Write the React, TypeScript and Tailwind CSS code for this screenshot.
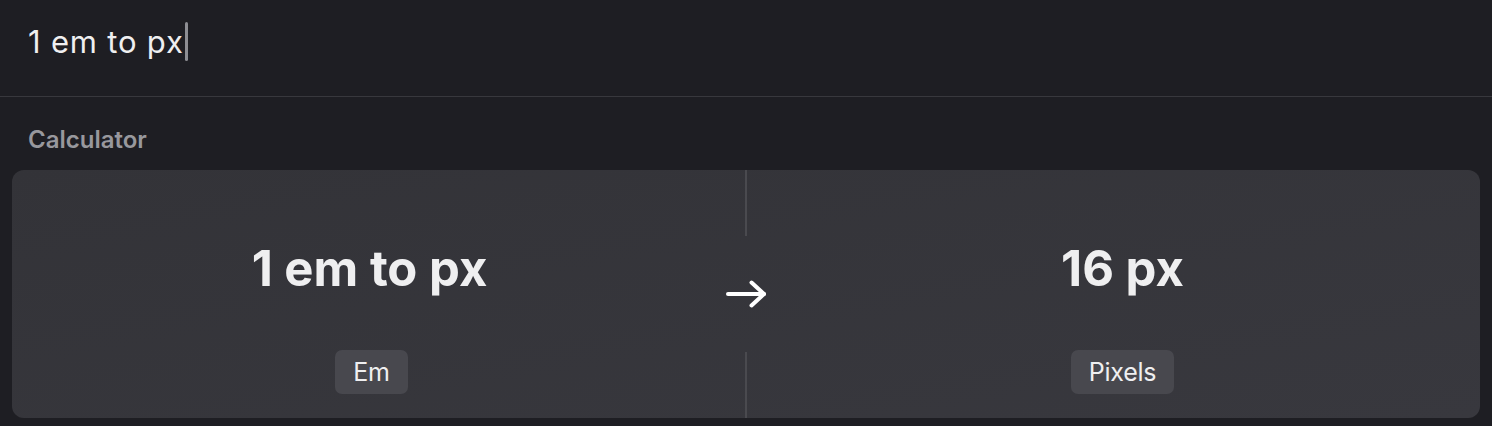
export default function App() {
  return (
    <div className="flex h-[426px] w-[1492px] flex-col overflow-hidden bg-[#1e1e23] font-['Inter',sans-serif] text-[#efeff0]">
      <div className="flex h-[97px] items-start border-b border-[#38383d] px-[28px] pt-[22px]">
        <span className="text-[31px] leading-[40px] tracking-[0.8px]">1 em to px</span>
        <span className="ml-[1px] h-[39px] w-[3px] rounded-full bg-[#8e8e93]" />
      </div>

      <div className="px-[28px] pt-[28px] pb-[16px] text-[24px] leading-[29px] font-semibold text-[#98989d]">
        Calculator
      </div>

      <div className="mx-[12px] flex h-[248px] rounded-[12px] bg-gradient-to-br from-[#333338] to-[#38383e]">
        <div className="flex flex-1 flex-col items-center">
          <div className="mt-[74px] text-[49px] font-bold leading-none">1 em to px</div>
          <div className="mt-auto mb-[24px] ml-[4px] rounded-[7px] bg-[#48484e] px-[18px] py-[7px] text-[25px] leading-[30px] tracking-[-0.2px]">
            Em
          </div>
        </div>

        <div className="flex w-[38px] flex-col items-center">
          <div className="h-[66px] w-[2px] bg-[#4a4a4f]" />
          <div className="flex flex-1 items-center justify-center">
            <svg width="40" height="28" viewBox="0 0 40 28" fill="none" stroke="white" strokeWidth="4" strokeLinecap="round" strokeLinejoin="round">
              <path d="M2 14H38" />
              <path d="M25.5 2.5L38 14L25.5 25.5" />
            </svg>
          </div>
          <div className="h-[66px] w-[2px] bg-[#4a4a4f]" />
        </div>

        <div className="flex flex-1 flex-col items-center">
          <div className="mt-[74px] text-[49px] font-bold leading-none">16 px</div>
          <div className="mt-auto mb-[24px] rounded-[7px] bg-[#48484e] px-[18px] py-[7px] text-[25px] leading-[30px] tracking-[-0.2px]">
            Pixels
          </div>
        </div>
      </div>
    </div>
  )
}
